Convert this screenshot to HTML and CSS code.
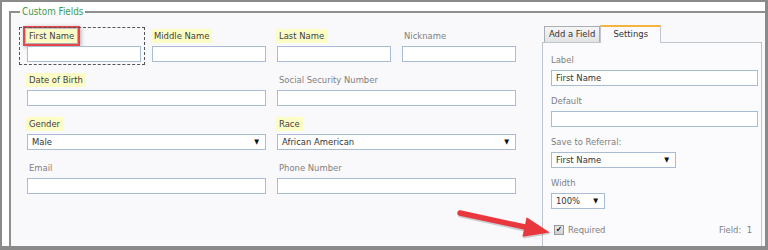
FILE: index.html
```html
<!DOCTYPE html>
<html lang="en">
<head>
    <meta charset="UTF-8">
    <title>Custom Fields</title>
    <link rel="stylesheet" href="styles.css">
</head>
<body>

<div class="frame">
    <fieldset class="custom">
        <legend>Custom Fields</legend>
        <div class="layout">
            <!-- Form fields grid -->
            <div class="fields">
                <div class="field selected">
                    <span class="label hl active">First Name</span>
                    <div class="input"></div>
                </div>
                <div class="field">
                    <span class="label hl">Middle Name</span>
                    <div class="input"></div>
                </div>
                <div class="field">
                    <span class="label hl">Last Name</span>
                    <div class="input"></div>
                </div>
                <div class="field">
                    <span class="label">Nickname</span>
                    <div class="input"></div>
                </div>
                <div class="field wide">
                    <span class="label hl">Date of Birth</span>
                    <div class="input"></div>
                </div>
                <div class="field wide">
                    <span class="label">Social Security Number</span>
                    <div class="input"></div>
                </div>
                <div class="field wide">
                    <span class="label hl">Gender</span>
                    <div class="select"><span>Male</span><span class="caret">&#9660;</span></div>
                </div>
                <div class="field wide">
                    <span class="label hl">Race</span>
                    <div class="select"><span>African American</span><span class="caret">&#9660;</span></div>
                </div>
                <div class="field wide">
                    <span class="label">Email</span>
                    <div class="input"></div>
                </div>
                <div class="field wide">
                    <span class="label">Phone Number</span>
                    <div class="input"></div>
                </div>
            </div>

            <!-- Settings side panel -->
            <div class="side">
                <div class="tabs">
                    <span class="tab">Add a Field</span>
                    <span class="tab current">Settings</span>
                </div>
                <div class="panel">
                    <div class="group">
                        <span class="plabel">Label</span>
                        <div class="input long">First Name</div>
                    </div>
                    <div class="group">
                        <span class="plabel">Default</span>
                        <div class="input long"></div>
                    </div>
                    <div class="group">
                        <span class="plabel">Save to Referral:</span>
                        <div class="select referral"><span>First Name</span><span class="caret">&#9660;</span></div>
                    </div>
                    <div class="group">
                        <span class="plabel">Width</span>
                        <div class="select width"><span>100%</span><span class="caret">&#9660;</span></div>
                    </div>
                    <div class="footer">
                        <label class="check"><span class="box">&#10004;</span>Required</label>
                        <span class="count">Field:&nbsp; 1</span>
                    </div>
                </div>
            </div>
        </div>
    </fieldset>

    <!-- Callout arrow -->
    <svg class="arrow" width="768" height="250" viewBox="0 0 768 250">
        <g transform="translate(460,213) rotate(12.2)">
            <line x1="1" y1="1.5" x2="70" y2="1.5" stroke="rgba(0,0,0,0.18)" stroke-width="6" stroke-linecap="round"/>
            <polygon points="67,-8.5 93,1.5 67,11.5" fill="rgba(0,0,0,0.18)"/>
            <line x1="0" y1="0" x2="70" y2="0" stroke="#e8383d" stroke-width="5.5" stroke-linecap="round"/>
            <polygon points="66,-10 92,0 66,10" fill="#e8383d"/>
        </g>
    </svg>
</div>

</body>
</html>
```

FILE: styles.css
```css
body {
    margin: 0;
    background-color: #fff;
    font-family: 'DejaVu Sans Condensed', 'DejaVu Sans', sans-serif;
    font-size: 9.4px;
    color: #444;
}
.frame {
    position: relative;
    box-sizing: border-box;
    width: 768px;
    height: 250px;
    border-style: solid;
    border-color: #8a8a8a;
    border-width: 2px 3px 4px 2px;
    padding: 4px 0 0 7px;
    overflow: hidden;
}
.custom {
    margin: 0;
    padding: 0;
    height: 100%;
    box-sizing: border-box;
    border: none;
    border-top: 2px solid #8f8f8f;
    border-left: 2px solid #8f8f8f;
    background-color: #f9f9fc;
}
.custom legend {
    margin-left: 9px;
    padding: 0 2px;
    line-height: 12px;
    font-size: 9.8px;
    color: #3d9b52;
}
.layout {
    display: flex;
    align-items: flex-start;
    padding-left: 16px;
}

/* Left form grid */
.fields {
    display: grid;
    grid-template-columns: repeat(4, 114px);
    column-gap: 11px;
    row-gap: 11px;
    padding-top: 11px;
}
.field {
    position: relative;
    display: flex;
    flex-direction: column;
    gap: 3px;
}
.field.wide {
    grid-column: span 2;
}
.label {
    align-self: flex-start;
    line-height: 14px;
    padding: 0 3px;
    margin-left: -1px;
    color: #808080;
}
.label.hl {
    background-color: #fcfcc6;
    color: #3f3f3f;
}
.label.active {
    outline: 2px solid #e5474c;
    outline-offset: 1px;
    box-shadow: 1px 1px 4px 3px rgba(0, 0, 0, 0.3);
}
.field.selected::before {
    content: "";
    position: absolute;
    left: -8px;
    right: -4px;
    top: -2px;
    bottom: -3px;
    border: 1px dashed #555;
}
.input, .select {
    box-sizing: border-box;
    height: 16px;
    border: 1px solid #a8bcd5;
    background-color: #fff;
    line-height: 14px;
    padding: 0 4px;
    color: #333;
}
.select {
    display: flex;
    justify-content: space-between;
}
.caret {
    font-size: 7px;
    color: #111;
    padding-right: 2px;
}

/* Right settings panel */
.side {
    margin-left: 26px;
    padding-top: 7px;
}
.tabs {
    display: flex;
    align-items: flex-end;
    padding-left: 2px;
}
.tab {
    box-sizing: border-box;
    height: 16px;
    line-height: 14px;
    padding: 0 4px;
    border: 1px solid #a9adb5;
    border-bottom: none;
    background: linear-gradient(#f6f6f6, #e3e3e3);
    color: #333;
}
.tab.current {
    width: 61px;
    height: 18px;
    margin-bottom: -1px;
    text-align: center;
    border-color: #bfc5cf;
    border-top: 2px solid #f4b43f;
    background: #fbfbfd;
}
.panel {
    box-sizing: border-box;
    width: 220px;
    height: 210px;
    border: 1px solid #bfc5cf;
    background-color: #fbfbfd;
    padding: 11px 0 0 8px;
    display: flex;
    flex-direction: column;
    gap: 9px;
}
.group {
    display: flex;
    flex-direction: column;
    gap: 4px;
}
.plabel {
    line-height: 12px;
    color: #808080;
}
.input.long {
    width: 207px;
}
.select.referral {
    width: 125px;
}
.select.width {
    width: 54px;
}
.footer {
    display: flex;
    justify-content: space-between;
    margin-top: 6px;
    padding: 0 9px 0 3px;
    line-height: 12px;
    color: #808080;
}
.check {
    display: flex;
    align-items: center;
    gap: 4px;
}
.box {
    box-sizing: border-box;
    width: 10px;
    height: 10px;
    border: 1px solid #9a9a9a;
    background: linear-gradient(#e8e8e8, #cfcfcf);
    color: #222;
    font-size: 8px;
    line-height: 8px;
    text-align: center;
}

.arrow {
    position: absolute;
    left: -2px;
    top: -2px;
    pointer-events: none;
}
```
